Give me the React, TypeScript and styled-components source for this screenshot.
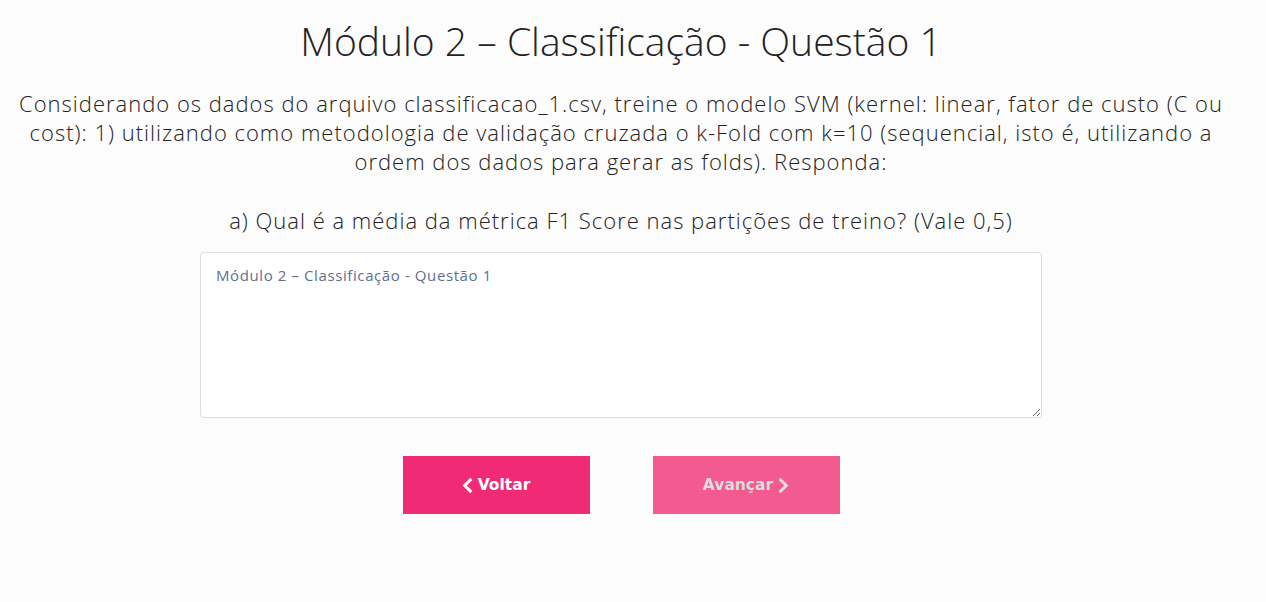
import styled, { createGlobalStyle } from 'styled-components'

const GlobalStyle = createGlobalStyle`
    html, body {
        margin: 0;
        padding: 0;
        background: #fcfcfc;
    }
    body {
        font-family: 'Open Sans', Lato, sans-serif;
        color: #222;
    }
`

const Page = styled.div`
    display: flex;
    flex-direction: column;
    align-items: center;
    padding: 17px 24px 0 0;
    min-height: 602px;
    box-sizing: border-box;
`

const Title = styled.h1`
    margin: 0;
    font-size: 39px;
    font-weight: 300;
    line-height: 48px;
    color: #222;
`

const Statement = styled.p`
    margin: 24px 0 0;
    padding: 0 14px;
    font-size: 22px;
    font-weight: 300;
    letter-spacing: 1px;
    line-height: 29px;
    text-align: center;
    color: #222;
`

const Question = styled.p`
    margin: 30px 0 0;
    font-size: 22px;
    font-weight: 300;
    letter-spacing: 1px;
    line-height: 29px;
    text-align: center;
`

const Answer = styled.textarea`
    margin-top: 17px;
    width: 842px;
    height: 166px;
    box-sizing: border-box;
    padding: 12px 15px;
    border: 1px solid #d9dde4;
    border-radius: 4px;
    background: #fff;
    font-family: 'Open Sans', sans-serif;
    font-size: 15px;
    letter-spacing: 0.6px;
    color: #333;

    &::placeholder {
        color: #5f6f8f;
    }
`

const Actions = styled.div`
    display: flex;
    gap: 63px;
    margin-top: 38px;
`

const NavButton = styled.button<{ $muted?: boolean }>`
    display: flex;
    align-items: center;
    justify-content: center;
    gap: 5px;
    width: 187px;
    height: 58px;
    border: none;
    border-radius: 0;
    background: ${p => p.$muted ? '#f25a90' : '#f02a75'};
    color: ${p => p.$muted ? '#dcdcdc' : '#fff'};
    font-family: 'DejaVu Sans', Verdana, sans-serif;
    font-size: 15.5px;
    font-weight: bold;
    cursor: pointer;
`

const Chevron = ({ dir }: { dir: 'left' | 'right' }) => (
    <svg width='11' height='15' viewBox='0 0 12 16'>
        <path
            d={dir === 'left' ? 'M9 2 L3 8 L9 14' : 'M3 2 L9 8 L3 14'}
            fill='none'
            stroke='currentColor'
            strokeWidth='3.4'
            strokeLinecap='square'
        />
    </svg>
)

export default function App() {
    return (
        <>
            <GlobalStyle />
            <Page>
                <Title>Módulo 2 – Classificação - Questão 1</Title>
                <Statement>
                    Considerando os dados do arquivo classificacao_1.csv, treine o modelo SVM (kernel: linear, fator de custo (C ou cost): 1) utilizando como metodologia de validação cruzada o k-Fold com k=10 (sequencial, isto é, utilizando a ordem dos dados para gerar as folds). Responda:
                </Statement>
                <Question>a) Qual é a média da métrica F1 Score nas partições de treino? (Vale 0,5)</Question>
                <Answer placeholder='Módulo 2 – Classificação - Questão 1' />
                <Actions>
                    <NavButton>
                        <Chevron dir='left' />
                        Voltar
                    </NavButton>
                    <NavButton $muted>
                        Avançar
                        <Chevron dir='right' />
                    </NavButton>
                </Actions>
            </Page>
        </>
    )
}
